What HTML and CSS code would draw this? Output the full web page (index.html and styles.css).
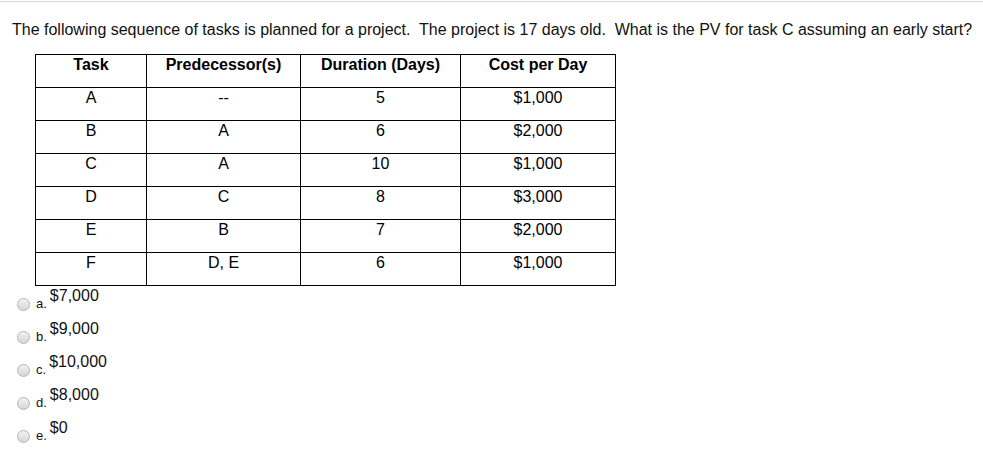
FILE: index.html
```html
<!DOCTYPE html>
<html>
<head>
<meta charset="utf-8">
<link rel="stylesheet" href="styles.css">
</head>
<body>
<div class="question">
  <p class="prompt">The following sequence of tasks is planned for a project.&nbsp; The project is 17 days old.&nbsp; What is the PV for task C assuming an early start?</p>
  <table class="tasks">
    <colgroup>
      <col class="c1"><col class="c2"><col class="c3"><col class="c4">
    </colgroup>
    <thead>
      <tr><th>Task</th><th>Predecessor(s)</th><th>Duration (Days)</th><th>Cost per Day</th></tr>
    </thead>
    <tbody>
      <tr><td>A</td><td>--</td><td>5</td><td>$1,000</td></tr>
      <tr><td>B</td><td>A</td><td>6</td><td>$2,000</td></tr>
      <tr><td>C</td><td>A</td><td>10</td><td>$1,000</td></tr>
      <tr><td>D</td><td>C</td><td>8</td><td>$3,000</td></tr>
      <tr><td>E</td><td>B</td><td>7</td><td>$2,000</td></tr>
      <tr><td>F</td><td>D, E</td><td>6</td><td>$1,000</td></tr>
    </tbody>
  </table>
  <div class="choices">
    <label class="choice"><span class="radio"></span><span class="letter">a.</span><span class="amount">$7,000</span></label>
    <label class="choice"><span class="radio"></span><span class="letter">b.</span><span class="amount">$9,000</span></label>
    <label class="choice"><span class="radio"></span><span class="letter">c.</span><span class="amount">$10,000</span></label>
    <label class="choice"><span class="radio"></span><span class="letter">d.</span><span class="amount">$8,000</span></label>
    <label class="choice"><span class="radio"></span><span class="letter">e.</span><span class="amount">$0</span></label>
  </div>
</div>
</body>
</html>
```
FILE: styles.css
```css
html, body {
  margin: 0;
  padding: 0;
  background: #fff;
}
body {
  font-family: "Liberation Sans", Arial, sans-serif;
  color: #111;
}
.question {
  margin-top: 1px;
  border-top: 1px solid #d6d6d6;
}
.prompt {
  margin: 0;
  padding: 19px 0 0 12px;
  font-size: 16px;
  line-height: 18px;
  white-space: nowrap;
}
.tasks {
  margin: 15px 0 0 35px;
  border-collapse: collapse;
  table-layout: fixed;
  width: 580px;
  font-size: 16px;
  line-height: 18px;
  color: #000;
}
.c1 { width: 111px; }
.c2 { width: 154px; }
.c3 { width: 160px; }
.c4 { width: 155px; }
.tasks th, .tasks td {
  border: 1px solid #000;
  height: 33px;
  box-sizing: border-box;
  padding: 1px 4px 0;
  vertical-align: top;
  text-align: center;
}
.tasks th {
  font-weight: bold;
}
.choices {
  display: flex;
  flex-direction: column;
}
.choice {
  display: flex;
  align-items: flex-start;
  height: 33px;
}
.radio {
  width: 11px;
  height: 11px;
  margin: 12px 0 0 17px;
  border: 1px solid #b5b5b5;
  border-radius: 50%;
  background: linear-gradient(#f2f2f2, #d6d6d6);
  flex: none;
}
.letter {
  margin: 10px 0 0 6px;
  font-size: 13px;
  line-height: 15px;
}
.amount {
  margin: 1px 0 0 3px;
  font-size: 16px;
  line-height: 18px;
}
```
